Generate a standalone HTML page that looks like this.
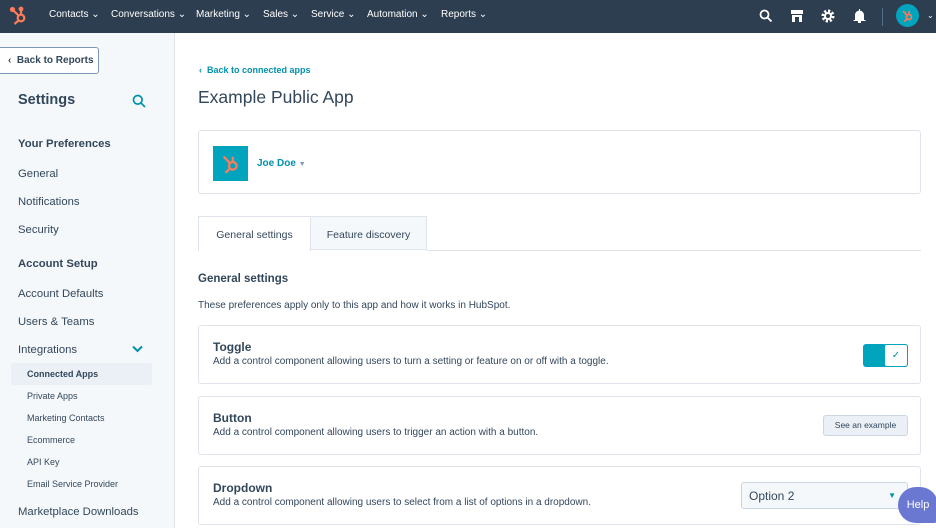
<!DOCTYPE html>
<html><head><meta charset="utf-8"><style>
*{box-sizing:border-box;margin:0;padding:0}
body{width:936px;height:528px;overflow:hidden;font-family:"Liberation Sans",sans-serif;color:#33475b;background:#fff;position:relative}
.nav{position:absolute;left:0;top:0;width:936px;height:33px;background:#2d3e50}
.nav span{position:absolute;top:9px;color:#fff;font-size:10px}
.side{position:absolute;left:0;top:33px;width:175px;height:495px;background:#f5f8fa;border-right:1px solid #dfe3eb}
.a{position:absolute;white-space:nowrap}
.s{font-size:11.3px;color:#33475b}
.ss{font-size:9px;color:#33475b}
.card{position:absolute;left:198px;width:723px;border:1px solid #dfe3eb;border-radius:3px;background:#fff}
.ct{position:absolute;left:14px;top:14px;font-size:12px;font-weight:bold}
.cd{position:absolute;left:14px;top:30px;font-size:10px}
</style></head><body>
<div class="nav">
<svg style="position:absolute;left:9px;top:6px" width="20" height="20" viewBox="0 0 20 20" fill="none" stroke="#ff7a59" stroke-width="2.2"><circle cx="12" cy="12" r="3.3"/><path d="M12 8.7V4M4 4l5.5 5.5M9.5 14.5l-4 3.5"/><circle cx="12" cy="3" r="1.3" fill="#ff7a59"/><circle cx="3.5" cy="3.5" r="1.5" fill="#ff7a59"/></svg>
<span style="left:49px">Contacts ⌄</span>
<span style="left:111px">Conversations ⌄</span>
<span style="left:196px">Marketing ⌄</span>
<span style="left:263px">Sales ⌄</span>
<span style="left:311px">Service ⌄</span>
<span style="left:367px">Automation ⌄</span>
<span style="left:441px">Reports ⌄</span>
<svg style="position:absolute;left:759px;top:9px" width="14" height="14" viewBox="0 0 14 14" fill="none" stroke="#fff" stroke-width="1.8"><circle cx="5.5" cy="5.5" r="4"/><path d="M8.5 8.5l4 4"/></svg>
<svg style="position:absolute;left:790px;top:9px" width="14" height="14" viewBox="0 0 14 14" fill="#fff"><rect x="1" y="1" width="12" height="4"/><rect x="2" y="6" width="10" height="7"/><rect x="5" y="8" width="4" height="5" fill="#2d3e50"/></svg>
<svg style="position:absolute;left:821px;top:9px" width="14" height="14" viewBox="0 0 14 14"><circle cx="7" cy="7" r="5" fill="none" stroke="#fff" stroke-width="3" stroke-dasharray="2.2 1.7"/><circle cx="7" cy="7" r="3" fill="none" stroke="#fff" stroke-width="2"/></svg>
<svg style="position:absolute;left:853px;top:9px" width="13" height="14" viewBox="0 0 13 14" fill="#fff"><path d="M2 11V6a4.5 4.5 0 019 0v5h1.5v1H.5v-1z"/><rect x="5" y="12" width="3" height="2"/><rect x="6" y="0" width="1" height="2"/></svg>
<div style="position:absolute;left:882px;top:8px;width:1px;height:18px;background:#516f90"></div>
<div style="position:absolute;left:896px;top:4px;width:23px;height:23px;border-radius:50%;background:#00a4bd"></div>
<svg style="position:absolute;left:900px;top:8px" width="15" height="15" viewBox="0 0 20 20" fill="none" stroke="#ff7a59" stroke-width="2.2"><circle cx="12" cy="12" r="3.3"/><path d="M12 8.7V4M4 4l5.5 5.5M9.5 14.5l-4 3.5"/></svg>
<span style="left:927px;font-size:8px;top:11px">⌄</span>
</div>
<div class="side">
<div class="a" style="left:0;top:14px;width:99px;height:27px;border:1px solid #7c98b6;border-left:none;border-radius:0 3px 3px 0;background:#fff;font-size:10px;font-weight:bold;padding:7px 0 0 8px">‹&nbsp;&nbsp;Back to Reports</div>
<div class="a" style="left:18px;top:59px;font-size:14.5px;font-weight:bold">Settings</div>
<svg class="a" style="left:132px;top:61px" width="14" height="14" viewBox="0 0 14 14" fill="none" stroke="#0091ae" stroke-width="1.7"><circle cx="5.8" cy="5.8" r="4.3"/><path d="M9 9l4 4"/></svg>
<div class="a s" style="left:18px;top:105px;font-weight:bold">Your Preferences</div>
<div class="a s" style="left:18px;top:135px">General</div>
<div class="a s" style="left:18px;top:163px">Notifications</div>
<div class="a s" style="left:18px;top:191px">Security</div>
<div class="a s" style="left:18px;top:225px;font-weight:bold">Account Setup</div>
<div class="a s" style="left:18px;top:255px">Account Defaults</div>
<div class="a s" style="left:18px;top:283px">Users &amp; Teams</div>
<div class="a s" style="left:18px;top:311px">Integrations</div>
<svg class="a" style="left:132px;top:312px" width="11" height="8" viewBox="0 0 11 8" fill="none" stroke="#0091ae" stroke-width="2"><path d="M1 1.5l4.5 4.5L10 1.5"/></svg>
<div class="a" style="left:11px;top:330px;width:141px;height:22px;background:#eaf0f6;border-radius:2px"></div>
<div class="a ss" style="left:27px;top:336px;font-weight:bold">Connected Apps</div>
<div class="a ss" style="left:27px;top:358px">Private Apps</div>
<div class="a ss" style="left:27px;top:380px">Marketing Contacts</div>
<div class="a ss" style="left:27px;top:402px">Ecommerce</div>
<div class="a ss" style="left:27px;top:424px">API Key</div>
<div class="a ss" style="left:27px;top:446px">Email Service Provider</div>
<div class="a s" style="left:18px;top:473px">Marketplace Downloads</div>
</div>
<div class="a" style="left:199px;top:65px;font-size:9px;color:#0091ae;font-weight:bold">‹&nbsp;&nbsp;Back to connected apps</div>
<div class="a" style="left:198px;top:87px;font-size:17.5px;color:#33475b">Example Public App</div>
<div class="card" style="top:130px;height:64px">
<div class="a" style="left:14px;top:15px;width:35px;height:35px;background:#00a4bd"></div>
<svg class="a" style="left:20px;top:21px" width="23" height="23" viewBox="0 0 20 20" fill="none" stroke="#ff7a59" stroke-width="2"><circle cx="12" cy="12" r="3.3"/><path d="M12 8.7V4M4 4l5.5 5.5M9.5 14.5l-4 3.5"/></svg>
<div class="a" style="left:58px;top:27px;font-size:10px;font-weight:bold;color:#0091ae">Joe Doe <span style="color:#7c98b6;font-size:7px">▼</span></div>
</div>
<div class="a" style="left:198px;top:216px;width:113px;height:35px;border:1px solid #dfe3eb;border-bottom:none;background:#fff;font-size:10.5px;text-align:center;padding-top:12px">General settings</div>
<div class="a" style="left:310px;top:216px;width:117px;height:34px;border:1px solid #dfe3eb;background:#f5f8fa;font-size:10.5px;text-align:center;padding-top:12px">Feature discovery</div>
<div class="a" style="left:427px;top:250px;width:494px;height:1px;background:#dfe3eb"></div>
<div class="a" style="left:198px;top:273px;font-size:11.5px;font-weight:bold">General settings</div>
<div class="a" style="left:198px;top:300px;font-size:10px">These preferences apply only to this app and how it works in HubSpot.</div>
<div class="card" style="top:325px;height:59px"><div class="ct">Toggle</div><div class="cd">Add a control component allowing users to turn a setting or feature on or off with a toggle.</div>
<div class="a" style="left:664px;top:18px;width:45px;height:23px;background:#00a4bd;border-radius:3px"></div>
<div class="a" style="left:685px;top:18px;width:24px;height:23px;background:#fff;border:1px solid #00a4bd;border-radius:3px;color:#0091ae;font-size:10px;text-align:center;line-height:21px">✓</div></div>
<div class="card" style="top:396px;height:59px"><div class="ct">Button</div><div class="cd">Add a control component allowing users to trigger an action with a button.</div>
<div class="a" style="left:624px;top:18px;width:85px;height:21px;background:#eaf0f6;border:1px solid #cbd6e2;border-radius:3px;font-size:8.5px;text-align:center;line-height:19px">See an example</div></div>
<div class="card" style="top:466px;height:59px"><div class="ct">Dropdown</div><div class="cd">Add a control component allowing users to select from a list of options in a dropdown.</div>
<div class="a" style="left:542px;top:15px;width:167px;height:27px;background:#f5f8fa;border:1px solid #cbd6e2;border-radius:3px;font-size:12px;padding:6px 0 0 7px">Option 2<span style="position:absolute;right:11px;top:8px;color:#0091ae;font-size:8px">▼</span></div></div>
<div class="a" style="left:898px;top:487px;width:40px;height:36px;background:#6a78d1;border-radius:18px 18px 4px 18px;color:#fff;font-size:11px;text-align:center;line-height:36px">Help</div>
</body></html>
